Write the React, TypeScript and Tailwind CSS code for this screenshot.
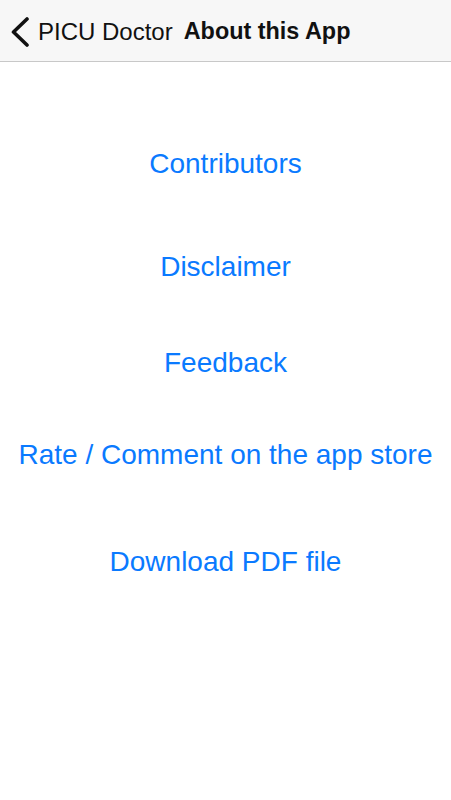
const links = [
  { label: 'Contributors', mt: 'mt-[86px]' },
  { label: 'Disclaimer', mt: 'mt-[71px]' },
  { label: 'Feedback', mt: 'mt-[64px]' },
  { label: 'Rate / Comment on the app store', mt: 'mt-[60px]' },
  { label: 'Download PDF file', mt: 'mt-[75px]' },
];

const App: React.FC = () => {
  return (
    <div className="w-[451px] h-[800px] bg-white font-['Liberation_Sans',Arial,sans-serif]">
      <header className="h-[62px] bg-[#f7f7f7] border-b border-[#c8c8c8] flex items-center pt-[2px]">
        <button className="flex items-center pl-[9px] text-[#111]">
          <svg width="22" height="30" viewBox="0 0 22 30" fill="none">
            <path d="M18 2 L4.5 15 L18 28" stroke="#111" strokeWidth="3.6" strokeLinecap="round" strokeLinejoin="round" />
          </svg>
          <span className="ml-[7px] text-[24px] leading-none">PICU Doctor</span>
        </button>
        <h1 className="ml-[11px] text-[23.4px] font-bold leading-none text-[#111]">About this App</h1>
      </header>
      <main className="flex flex-col items-center">
        {links.map((l) => (
          <a key={l.label} className={`${l.mt} h-[32px] leading-[32px] text-[28px] text-[#0a7aff] cursor-pointer`}>
            {l.label}
          </a>
        ))}
      </main>
    </div>
  );
};

export default App;
